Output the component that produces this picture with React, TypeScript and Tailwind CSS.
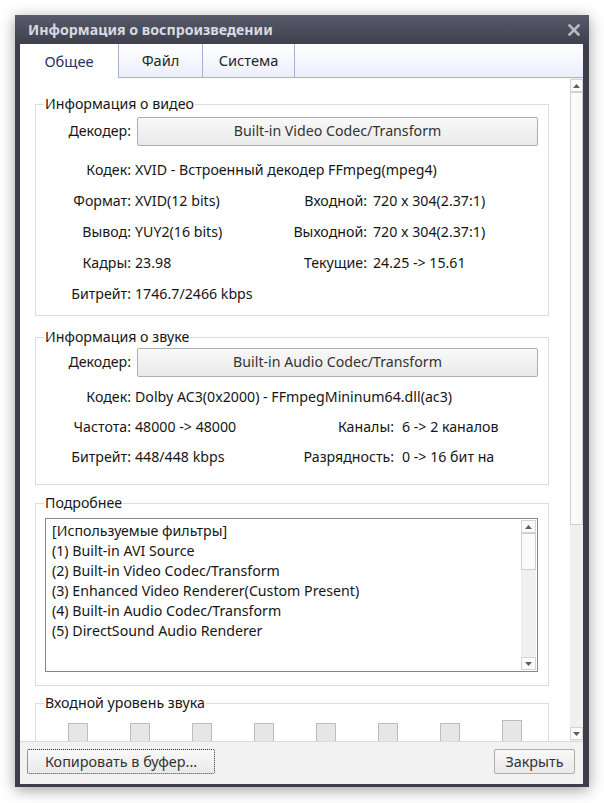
import React from "react";

type Props = { children?: React.ReactNode; className?: string };

// small scroll arrow glyph
function Arrow({ dir }: { dir: "up" | "down" }) {
  return (
    <svg width="7" height="4" viewBox="0 0 7 4" className="block">
      {dir === "up" ? (
        <polygon points="0,4 7,4 3.5,0" fill="#5b5d6b" />
      ) : (
        <polygon points="0,0 7,0 3.5,4" fill="#5b5d6b" />
      )}
    </svg>
  );
}

function ArrowButton({ dir }: { dir: "up" | "down" }) {
  return (
    <div className="flex h-[13px] items-center justify-center border border-[#d4d4d4] bg-[#fbfbfb]">
      <Arrow dir={dir} />
    </div>
  );
}

function Group({ title, className, children }: Props & { title: string }) {
  return (
    <fieldset className={`ml-[15px] w-[514px] border border-[#dcdcdc] ${className ?? ""}`}>
      <legend className="ml-[8px] px-[1px] leading-[20px]">{title}</legend>
      {children}
    </fieldset>
  );
}

function DecoderRow({ value }: { value: string }) {
  return (
    <div className="flex h-[30px] items-center">
      <span className="w-[95px] text-right">Декодер:</span>
      <div className="ml-[6px] flex h-[29px] w-[401px] items-center justify-center rounded-[2px] border border-[#adadad] bg-gradient-to-b from-[#f9f9f9] to-[#e9e9e9] text-[#333]">
        {value}
      </div>
    </div>
  );
}

const filters = [
  "[Используемые фильтры]",
  "(1) Built-in AVI Source",
  "(2) Built-in Video Codec/Transform",
  "(3) Enhanced Video Renderer(Custom Present)",
  "(4) Built-in Audio Codec/Transform",
  "(5) DirectSound Audio Renderer",
];

export default function App() {
  return (
    <div className="h-[803px] w-[604px] bg-white pl-[15px] pt-[15px] font-['Noto_Sans','DejaVu_Sans',sans-serif] text-[14.2px] text-[#161616]">
      <div className="flex h-[772px] w-[574px] flex-col bg-[#3d3e49] shadow-[0_3px_14px_rgba(0,0,0,0.38)]">
        {/* title bar */}
        <div className="flex h-[29px] items-center justify-between bg-gradient-to-b from-[#5a5b6b] to-[#3f404c] pl-[13px] pr-[9px]">
          <span className="text-[14.2px] font-bold text-[#d9d9e2]">Информация о воспроизведении</span>
          <svg width="12" height="12" viewBox="0 0 12 12">
            <path d="M1.5 1.5 L10.5 10.5 M10.5 1.5 L1.5 10.5" stroke="#b9b9c2" strokeWidth="2.6" strokeLinecap="square" />
          </svg>
        </div>

        <div className="ml-[5px] flex h-[740px] w-[563px] flex-col bg-white">
          {/* tabs */}
          <div className="flex h-[34px] border-b border-[#a8afd0] bg-gradient-to-b from-white to-[#eceffb]">
            <div className="-mb-px flex w-[99px] items-center justify-center border-r border-[#a8afd0] bg-white pt-[2px] text-[14.6px] text-[#27325e]">
              Общее
            </div>
            <div className="flex w-[84px] items-center justify-center border-r border-[#a8afd0] text-[14.6px] text-[#262626]">
              Файл
            </div>
            <div className="flex w-[92px] items-center justify-center border-r border-[#a8afd0] text-[14.6px] text-[#262626]">
              Система
            </div>
          </div>

          {/* scrolling content */}
          <div className="flex h-[663px]">
            <div className="w-[550px] overflow-hidden pt-[16px]">
              <Group title="Информация о видео" className="pb-[6px]">
                <div className="mt-[2px]">
                  <DecoderRow value="Built-in Video Codec/Transform" />
                </div>
                <div className="mt-[8px] flex h-[31px] items-center">
                  <span className="w-[95px] text-right">Кодек:</span>
                  <span className="ml-[4px]">XVID - Встроенный декодер FFmpeg(mpeg4)</span>
                </div>
                <div className="flex h-[31px] items-center">
                  <span className="w-[95px] text-right">Формат:</span>
                  <span className="ml-[4px] w-[150px]">XVID(12 bits)</span>
                  <span className="w-[82px] text-right">Входной:</span>
                  <span className="ml-[6px]">720 x 304(2.37:1)</span>
                </div>
                <div className="flex h-[31px] items-center">
                  <span className="w-[95px] text-right">Вывод:</span>
                  <span className="ml-[4px] w-[150px]">YUY2(16 bits)</span>
                  <span className="w-[82px] text-right">Выходной:</span>
                  <span className="ml-[6px]">720 x 304(2.37:1)</span>
                </div>
                <div className="flex h-[31px] items-center">
                  <span className="w-[95px] text-right">Кадры:</span>
                  <span className="ml-[4px] w-[150px]">23.98</span>
                  <span className="w-[82px] text-right">Текущие:</span>
                  <span className="ml-[6px]">24.25 -&gt; 15.61</span>
                </div>
                <div className="flex h-[31px] items-center">
                  <span className="w-[95px] text-right">Битрейт:</span>
                  <span className="ml-[4px]">1746.7/2466 kbps</span>
                </div>
              </Group>

              <Group title="Информация о звуке" className="mt-[11px] pb-[12px]">
                <DecoderRow value="Built-in Audio Codec/Transform" />
                <div className="mt-[5px] flex h-[30px] items-center">
                  <span className="w-[95px] text-right">Кодек:</span>
                  <span className="ml-[4px]">Dolby AC3(0x2000) - FFmpegMininum64.dll(ac3)</span>
                </div>
                <div className="flex h-[30px] items-center">
                  <span className="w-[95px] text-right">Частота:</span>
                  <span className="ml-[4px] w-[155px]">48000 -&gt; 48000</span>
                  <span className="w-[104px] text-right">Каналы:</span>
                  <span className="ml-[8px]">6 -&gt; 2 каналов</span>
                </div>
                <div className="flex h-[30px] items-center">
                  <span className="w-[95px] text-right">Битрейт:</span>
                  <span className="ml-[4px] w-[155px]">448/448 kbps</span>
                  <span className="w-[104px] text-right">Разрядность:</span>
                  <span className="ml-[8px]">0 -&gt; 16 бит на</span>
                </div>
              </Group>

              <Group title="Подробнее" className="mt-[8px] pb-[13px]">
                <div className="ml-[9px] mt-[5px] flex h-[154px] w-[493px] border border-[#828790]">
                  <div className="flex-1 pl-[6px] pt-[2px] leading-[20px]">
                    {filters.map((f) => (
                      <div key={f}>{f}</div>
                    ))}
                  </div>
                  <div className="my-[1px] mr-[1px] flex w-[15px] flex-col bg-[#f0f0f0]">
                    <ArrowButton dir="up" />
                    <div className="h-[37px] border border-[#cdcdcd] bg-[#fafafa]" />
                    <div className="flex-1" />
                    <ArrowButton dir="down" />
                  </div>
                </div>
              </Group>

              <Group title="Входной уровень звука" className="mt-[7px] h-[60px]">
                <div className="ml-[32px] mt-[10px] flex items-start gap-[42px]">
                  {[0, 1, 2, 3, 4, 5, 6].map((i) => (
                    <div key={i} className="h-[30px] w-[20px] border border-[#bcbcbc] bg-[#e6e6e6]" />
                  ))}
                  <div className="-mt-[3px] h-[33px] w-[20px] border border-[#bcbcbc] bg-[#e6e6e6]" />
                </div>
              </Group>
            </div>

            {/* outer scrollbar */}
            <div className="flex w-[13px] flex-col bg-[#f0f0f0] py-[1px]">
              <ArrowButton dir="up" />
              <div className="h-[433px] border border-[#d0d0d0] bg-[#fafafa]" />
              <div className="flex-1" />
              <ArrowButton dir="down" />
            </div>
          </div>

          {/* bottom buttons */}
          <div className="flex h-[43px] items-start justify-between border-t border-[#dadada] bg-[#f2f2f2] pl-[7px] pr-[8px] pt-[7px]">
            <button className="flex h-[25px] w-[188px] items-center justify-center rounded-[2px] border border-dotted border-[#333] bg-gradient-to-b from-[#f9f9f9] to-[#e9e9e9] text-[14.4px] text-[#333]">
              Копировать в буфер...
            </button>
            <button className="flex h-[25px] w-[81px] items-center justify-center rounded-[2px] border border-[#adadad] bg-gradient-to-b from-[#f9f9f9] to-[#e9e9e9] text-[14.4px] text-[#333]">
              Закрыть
            </button>
          </div>
        </div>
      </div>
    </div>
  );
}
